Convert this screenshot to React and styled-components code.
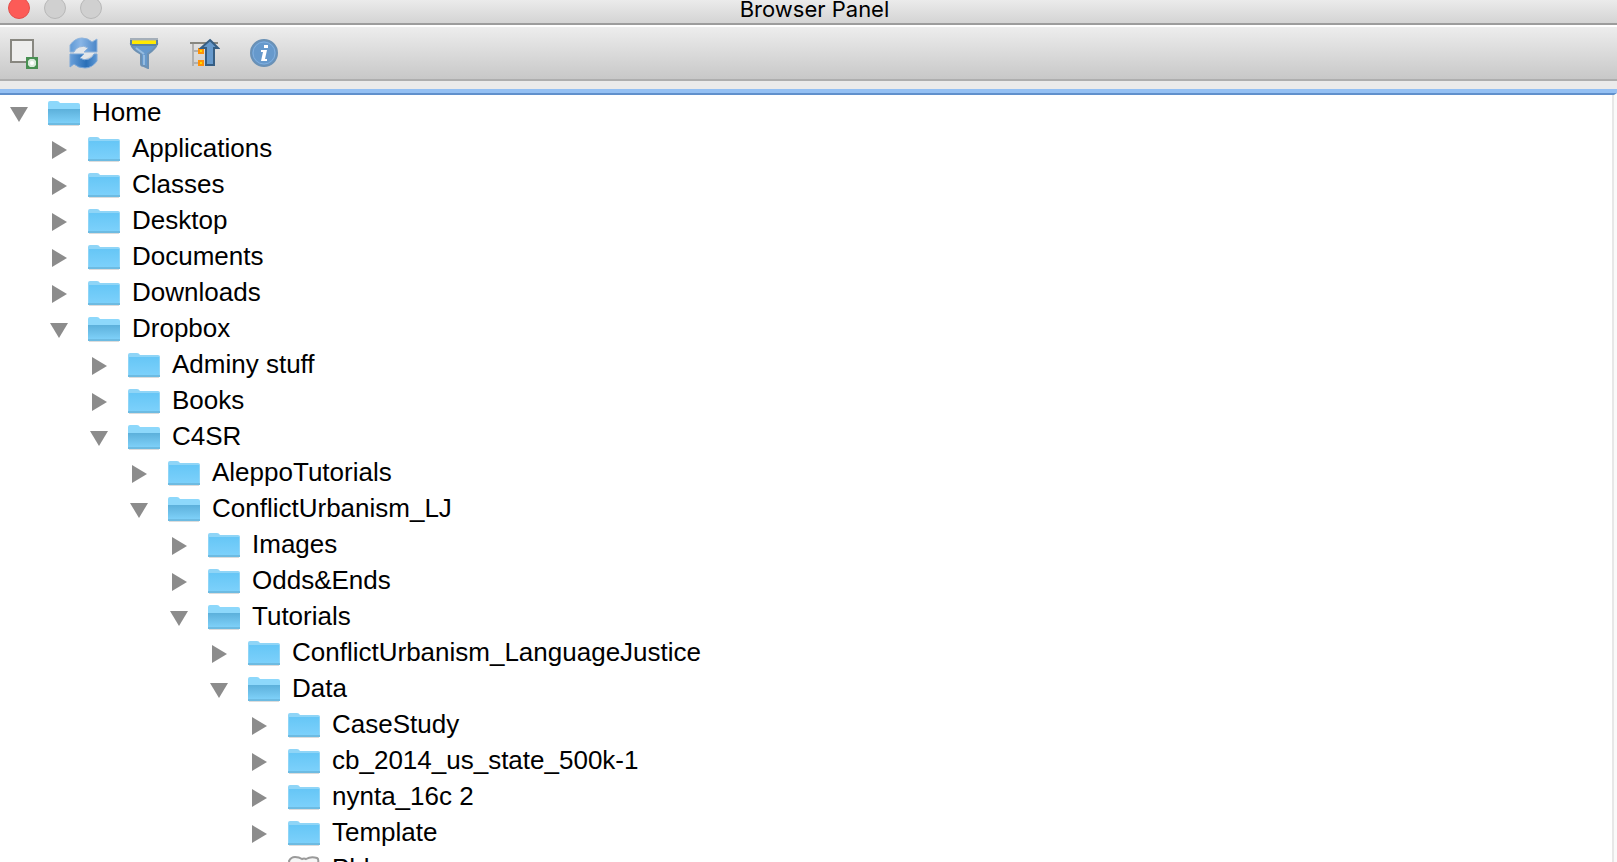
import React, { useState } from "react";
import styled, { createGlobalStyle } from "styled-components";

const GlobalStyle = createGlobalStyle`
  * { box-sizing: border-box; }
  html, body { margin: 0; padding: 0; overflow: hidden; }
  body { background: #fff; color: #000; font-family: "Liberation Sans", Helvetica, Arial, sans-serif; }
`;

const Window = styled.div`
  display: flex;
  flex-direction: column;
  height: 100vh;
  overflow: hidden;
  background: #ebebeb;
`;

const TitleBar = styled.header`
  display: grid;
  grid-template-columns: 96px 1fr 92px;
  align-items: start;
  flex: none;
  height: 25px;
  padding-left: 8px;
  background: linear-gradient(#ebebeb, #d4d4d4);
  border-bottom: 2px solid #9c9c9c;
`;

const Lights = styled.div`
  display: flex;
  gap: 14px;
  margin-top: -3px;
`;

const Light = styled.button`
  width: 22px;
  height: 22px;
  padding: 0;
  border: 1px solid ${(p) => p.$edge};
  border-radius: 50%;
  background: ${(p) => p.$fill};
`;

const Title = styled.h1`
  margin: 0;
  font: 400 22px/18px Inter, "Liberation Sans", sans-serif;
  text-align: center;
`;

const Toolbar = styled.div`
  display: flex;
  align-items: center;
  gap: 28px;
  flex: none;
  height: 56px;
  padding: 0 8px;
  border-top: 2px solid #fff;
  border-bottom: 2px solid #aeaeae;
  background: linear-gradient(#ededed, #c8c8c8);
`;

const ToolButton = styled.button`
  display: block;
  width: 32px;
  height: 32px;
  padding: 0;
  border: 0;
  background: none;

  svg { display: block; }
`;

const Panel = styled.main`
  flex: 1;
  min-height: 0;
  margin-top: 8px;
  border-top: 4px solid #94c0f3;
  overflow: hidden;
`;

const Scroller = styled.div`
  height: 100%;
  border-top: 2px solid #6090cc;
  border-right: 3px solid #fafafa;
  background: #fff;
  overflow: hidden;
`;

const Tree = styled.ul`
  height: 100%;
  margin: 0;
  padding: 0;
  border-right: 2px solid #e7e7e7;
  list-style: none;
`;

const Branch = styled.ul`
  margin: 0;
  padding: 0 0 0 40px;
  list-style: none;
`;

const Row = styled.div`
  display: flex;
  align-items: center;
  height: 36px;
  padding-left: 8px;
`;

const Toggle = styled.button`
  flex: none;
  width: 22px;
  height: 22px;
  margin-right: 18px;
  padding: 0;
  border: 0;
  background: none;

  svg { display: block; }
`;

const Label = styled.span`
  padding: 0 0 2px 12px;
  font-size: 26px;
  line-height: 28px;
  white-space: nowrap;
`;

function Folder({ open }) {
  return (
    <svg width="32" height="28" viewBox="0 -2 32 28" aria-hidden="true">
      <defs>
        <linearGradient id="closedFill" x1="0" y1="0" x2="0" y2="1">
          <stop offset="0" stopColor="#66c6f6" />
          <stop offset="1" stopColor="#7dd1fb" />
        </linearGradient>
        <linearGradient id="openFill" x1="0" y1="0" x2="0" y2="1">
          <stop offset="0" stopColor="#5cb0db" />
          <stop offset="1" stopColor="#80d2fa" />
        </linearGradient>
      </defs>
      <rect x="1" y="24" width="30" height="1" fill="#dcdcdc" />
      <path d="M0 2Q0 0 2 0h7q2 0 3 2h18q2 0 2 2v19H0z" fill={open ? "#8dd8fb" : "#8fd5f7"} />
      {open ? (
        <path d="M0 8h32v15H0z" fill="url(#openFill)" />
      ) : (
        <path d="M1 4h30v19H1z" fill="url(#closedFill)" />
      )}
      <path d="M0 23h32" stroke="#6dbbe2" strokeWidth="2" />
    </svg>
  );
}

function Drawing() {
  return (
    <svg width="32" height="28" viewBox="0 -1 32 28" aria-hidden="true">
      <path d="M1 5Q3 1 7 1t7 2q2-1 4 0 5-3 11-1 2 1 1 5l1 13-12 4-9-3-7-6z" fill="#f6f6f6" stroke="#9a9a9a" strokeWidth="2" />
    </svg>
  );
}

const LayerIcon = () => (
  <svg width="32" height="32" viewBox="0 0 32 32">
    <path d="M3 3h22v22H3z" fill="#eeeeed" stroke="#888780" strokeWidth="2" />
    <rect x="19" y="21" width="10" height="10" fill="#d9ebdc" stroke="#489052" strokeWidth="2" />
    <path d="M19 21l2 2m8-2-2 2m-8 8 2-2m8 2-2-2" stroke="#489052" strokeWidth="2" />
    <circle cx="24" cy="26" r="2" fill="#fff" />
  </svg>
);

const RefreshIcon = () => (
  <svg width="32" height="32" viewBox="0 0 32 32">
    <defs>
      <linearGradient id="refreshTop" x1="0" y1="0" x2="1" y2="0">
        <stop offset="0" stopColor="#5f9ad6" />
        <stop offset="0.4" stopColor="#8ab6e6" />
        <stop offset="1" stopColor="#4a86c8" />
      </linearGradient>
      <linearGradient id="refreshBottom" x1="0" y1="0" x2="1" y2="0">
        <stop offset="0" stopColor="#6aa0da" />
        <stop offset="0.6" stopColor="#2a6fb7" />
        <stop offset="1" stopColor="#5f98d4" />
      </linearGradient>
    </defs>
    <path d="M6 14Q8 8 13 8q4 0 6 3l-3 5 13-1V15L19 21l-6 3-7-3z" fill="#e2e6ea" />
    <path d="M2 15V8Q7 1 14 1q6 0 10 4l5-3v13H16l4-4q-4-3-9-1-4 2-5 5z" fill="url(#refreshTop)" stroke="#8fb3db" strokeWidth="1" />
    <path d="M2 30V17h14l-4 4q4 3 9 1 4-2 5-5h3v7q-5 7-12 7-7 0-11-4z" fill="url(#refreshBottom)" stroke="#7ba7d8" strokeWidth="1" />
  </svg>
);

const FilterIcon = () => (
  <svg width="32" height="32" viewBox="0 0 32 32">
    <path d="M3 7h26q-1 4-9 10v14l-4-2q-3 0-3-2V17Q4 12 3 7z" fill="#6699cc" stroke="#6d91b3" strokeWidth="2" />
    <path d="M16 18v10m-8-17 8 6" stroke="#94bbe0" strokeWidth="2" fill="none" />
    <path d="M2 1h28v6H2z" fill="#a5afb9" />
    <path d="M4 3h24v4H4z" fill="#ffe900" />
    <path d="M4 3h24v1H4z" fill="#d7cf55" />
    <path d="M2 3h2v5H2m26-5h2v5h-2M4 7h24v2H4z" fill="#5c83a3" />
  </svg>
);

const CollapseIcon = () => (
  <svg width="32" height="32" viewBox="0 0 32 32">
    <path d="M2 6h28" stroke="#888780" strokeWidth="2" />
    <path d="M5 7v22M6 14h6M6 26h6" stroke="#b0b0b0" strokeWidth="2" fill="none" />
    <path d="M11 12h4v4h-4zM11 24h4v4h-4z" fill="#ffdc00" stroke="#ff9208" strokeWidth="2" />
    <path d="M22 3 30 11h-4v17h-8V11h-5z" fill="#6699cc" stroke="#365e83" strokeWidth="2" />
  </svg>
);

const InfoIcon = () => (
  <svg width="32" height="32" viewBox="0 0 32 32">
    <circle cx="16" cy="16" r="13" fill="#6699cc" stroke="#6a91b6" strokeWidth="2" />
    <circle cx="16" cy="16" r="11" fill="none" stroke="#82afdd" strokeWidth="1" />
    <path d="M16 8h4v3h-4z" fill="#fff" />
    <path d="M13 13h6l-2 9h2v2h-6l2-9h-2z" fill="#fff" />
  </svg>
);

const tools = [
  ["Add selected layers", LayerIcon],
  ["Refresh", RefreshIcon],
  ["Filter browser", FilterIcon],
  ["Collapse all", CollapseIcon],
  ["Properties", InfoIcon],
];

const dir = (name, children) => ({ name, children });

const root = dir("Home", [
  dir("Applications"),
  dir("Classes"),
  dir("Desktop"),
  dir("Documents"),
  dir("Downloads"),
  dir("Dropbox", [
    dir("Adminy stuff"),
    dir("Books"),
    dir("C4SR", [
      dir("AleppoTutorials"),
      dir("ConflictUrbanism_LJ", [
        dir("Images"),
        dir("Odds&Ends"),
        dir("Tutorials", [
          dir("ConflictUrbanism_LanguageJustice"),
          dir("Data", [
            dir("CaseStudy"),
            dir("cb_2014_us_state_500k-1"),
            dir("nynta_16c 2"),
            dir("Template"),
            { name: "Phl", shape: true },
          ]),
        ]),
      ]),
    ]),
  ]),
]);

function TreeNode({ node }) {
  const [open, setOpen] = useState(Boolean(node.children));
  return (
    <li>
      <Row>
        <Toggle
          as={node.shape ? "span" : "button"}
          aria-label={node.shape ? undefined : `Toggle ${node.name}`}
          aria-expanded={node.shape ? undefined : open}
          onClick={() => setOpen(!open)}
        >
          {!node.shape && (
            <svg width="22" height="22" viewBox="0 0 22 22" aria-hidden="true">
              <path d={open ? "M2 5h18l-9 15z" : "M4 3v18l15-9z"} fill="#8c8c8c" />
            </svg>
          )}
        </Toggle>
        {node.shape ? <Drawing /> : <Folder open={open} />}
        <Label>{node.name}</Label>
      </Row>
      {open && node.children && (
        <Branch>
          {node.children.map((child) => (
            <TreeNode key={child.name} node={child} />
          ))}
        </Branch>
      )}
    </li>
  );
}

export default function App() {
  return (
    <Window>
      <GlobalStyle />
      <TitleBar>
        <Lights>
          <Light aria-label="Close" $fill="#fc5b57" $edge="#e2504c" />
          <Light aria-label="Minimize" $fill="#d0d0d0" $edge="#b8b8b8" />
          <Light aria-label="Zoom" $fill="#d0d0d0" $edge="#b8b8b8" />
        </Lights>
        <Title>Browser Panel</Title>
      </TitleBar>
      <Toolbar role="toolbar" aria-label="Browser tools">
        {tools.map(([name, Icon]) => (
          <ToolButton key={name} aria-label={name}>
            <Icon />
          </ToolButton>
        ))}
      </Toolbar>
      <Panel>
        <Scroller>
          <Tree>
            <TreeNode node={root} />
          </Tree>
        </Scroller>
      </Panel>
    </Window>
  );
}
